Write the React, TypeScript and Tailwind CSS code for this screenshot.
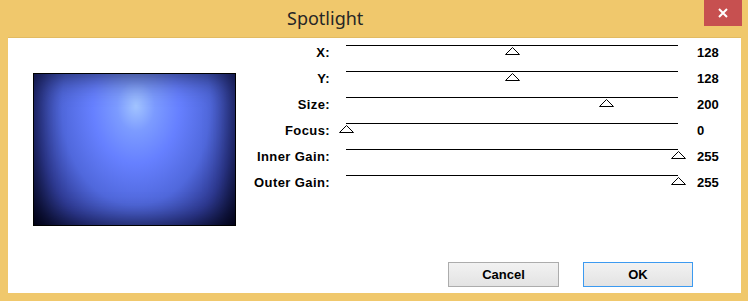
import React from "react";

const rows = [
  { label: "X:", value: 128 },
  { label: "Y:", value: 128 },
  { label: "Size:", value: 200 },
  { label: "Focus:", value: 0 },
  { label: "Inner Gain:", value: 255 },
  { label: "Outer Gain:", value: 255 },
];

function Thumb({ value }: { value: number }) {
  const left = (value / 255) * 332 - 7.5;
  return (
    <svg
      className="absolute top-[1px]"
      style={{ left }}
      width="15"
      height="8"
      viewBox="0 0 15 8"
    >
      <polygon points="7.5,0.5 14.5,7.5 0.5,7.5" fill="white" stroke="black" strokeWidth="1" />
    </svg>
  );
}

export default function App() {
  return (
    <div
      className="w-[748px] h-[301px] bg-[#F0C86C] flex flex-col overflow-hidden"
      style={{ fontFamily: '"Liberation Sans", Arial, sans-serif' }}
    >
      <div className="h-[37px] flex items-start shrink-0">
        <div
          className="flex-1 pl-[287px] pt-[6px] text-[18px] leading-[24px] text-[#262626]"
          style={{ fontFamily: '"Noto Sans", "Open Sans", sans-serif' }}
        >
          Spotlight
        </div>
        <div className="w-[38px] h-[26px] bg-[#C75050] flex items-center justify-center mr-[6px]">
          <svg width="10" height="10" viewBox="0 0 10 10">
            <path d="M1 1 L9 9 M9 1 L1 9" stroke="white" strokeWidth="2" />
          </svg>
        </div>
      </div>
      <div className="flex-1 ml-[8px] mr-[7px] mb-[8px] bg-white flex flex-col border-t border-[#e2bb62]">
        <div className="flex items-start">
          <div className="ml-[25px] mt-[35px] w-[203px] h-[153px] border border-black bg-[radial-gradient(ellipse_135px_180px_at_102px_32px,#a2c4ff_0%,#7c9bff_14%,#6680ff_32%,#5068dc_55%,#2f3b95_75%,#141a4a_90%,#03051a_100%)] shadow-[inset_0_0_28px_rgba(0,0,20,0.75)]" />
          <div className="mt-[7px] grid grid-cols-[94px_332px_auto] auto-rows-[26px]">
            {rows.map((r) => (
              <React.Fragment key={r.label}>
                <div className="text-right text-[13px] leading-[14px] font-bold tracking-[0.4px] text-black pt-[1px] whitespace-nowrap">
                  {r.label}
                </div>
                <div className="ml-[16px] w-[332px] relative border-t border-black h-[26px]">
                  <Thumb value={r.value} />
                </div>
                <div className="pl-[35px] text-[13px] leading-[14px] font-bold text-black pt-[1px]">
                  {r.value}
                </div>
              </React.Fragment>
            ))}
          </div>
        </div>
        <div className="mt-auto flex justify-end gap-[24px] pr-[48px] pb-[6px]">
          <button className="w-[111px] h-[25px] border border-[#acacac] bg-gradient-to-b from-[#f2f2f2] to-[#e3e3e3] text-[13px] font-bold text-black">
            Cancel
          </button>
          <button className="w-[110px] h-[25px] border border-[#3c9af0] bg-gradient-to-b from-[#f2f2f2] to-[#e3e3e3] text-[13px] font-bold text-black">
            OK
          </button>
        </div>
      </div>
    </div>
  );
}
